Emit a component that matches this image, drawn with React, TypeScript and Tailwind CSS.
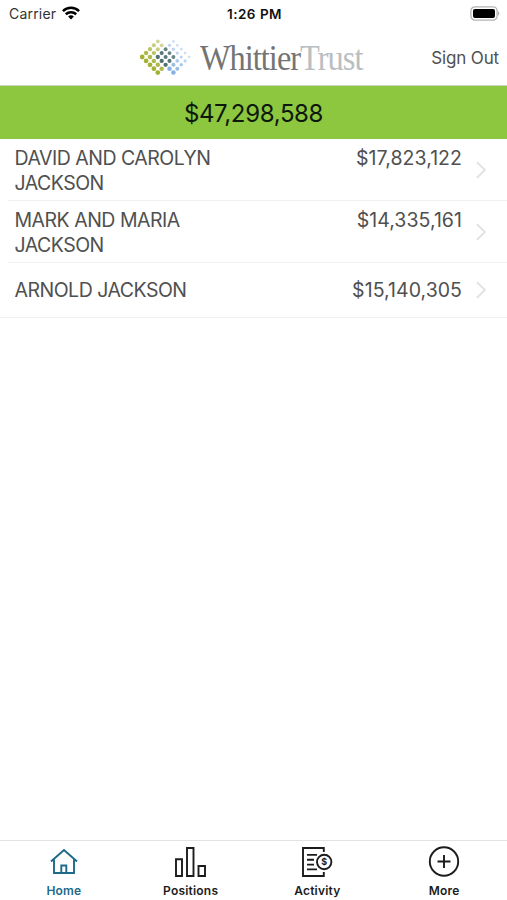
import React from "react";

type Dot = { x: number; y: number; c: string; r: number; o: number };
const dots: Dot[] = [];
const step = 3.9;
for (let i = 0; i < 5; i++) {
  for (let j = 0; j < 5; j++) {
    const u = i + j;
    const v = j - i;
    const shared = u - 4 >= Math.abs(v);
    dots.push({
      x: 4.2 + u * step,
      y: 21 + v * step,
      c: shared ? "#375c60" : "#a5b133",
      r: shared ? 2.35 - i * 0.1 : 2.4 - i * 0.14,
      o: shared ? 1 - i * 0.06 : 1 - i * 0.12,
    });
    // The right diamond starts four steps over and skips the cells both share.
    if (4 - u < Math.abs(v)) {
      dots.push({ x: 4.2 + (u + 4) * step, y: 21 + v * step, c: "#82addf", r: 2.25 - i * 0.22, o: 0.95 - i * 0.14 });
    }
  }
}

function Logo() {
  return (
    <div className="flex items-center">
      <svg width="54" height="42" viewBox="0 0 54 42">
        {dots.map((d, k) => (
          <circle key={k} cx={d.x} cy={d.y} r={d.r} fill={d.c} opacity={d.o} />
        ))}
      </svg>
      <div className="ml-2 flex w-[163px] origin-left scale-x-[0.925] pt-[5px] font-['Liberation_Serif',serif] text-[35px] leading-[42px] tracking-[-1.05px]">
        <span className="text-[#747474]">Whittier</span>
        <span className="text-[#b9bec2]">Trust</span>
      </div>
    </div>
  );
}

function Chevron() {
  return (
    <svg className="ml-[14px] mr-[21px] shrink-0" width="10" height="18" viewBox="0 0 10 18" fill="none" stroke="#e2e2e2" strokeWidth="1.9">
      <path d="M1 1.2 9 9 1 16.8" />
    </svg>
  );
}

function Row({ name, amount, h, last }: { name: React.ReactNode; amount: string; h: string; last?: boolean }) {
  return (
    <div className={last ? "border-b border-[#f2f2f2]" : ""}>
      <div className={`flex items-center ${h} ${last ? "pl-[15px]" : "ml-2 border-b border-[#f2f2f2] pl-[7px]"}`}>
        <div className={`flex grow items-start justify-between text-[19.5px] leading-[24.5px] text-[#505050] ${last ? "" : "pt-[2px]"}`}>
          <span className="-ml-[0.5px] tracking-[-0.5px]">{name}</span>
          <span className="tracking-[0.05px]">{amount}</span>
        </div>
        <Chevron />
      </div>
    </div>
  );
}

function Tab({ label, active, children }: { label: string; active?: boolean; children: React.ReactNode }) {
  return (
    <div className={`flex flex-1 flex-col items-center pl-px pt-[5px] ${active ? "text-[#1d6a8a]" : "text-[#1c1c1c]"}`}>
      <svg width="32" height="32" viewBox="0 0 32 32" fill="none" stroke="currentColor" strokeWidth="1.9">
        {children}
      </svg>
      <span className="mt-[5px] text-[12px] font-semibold leading-4 tracking-[0.2px]">{label}</span>
    </div>
  );
}

export default function App() {
  return (
    <div className="flex h-[900px] w-[507px] flex-col overflow-hidden bg-white font-['Inter',sans-serif]">
      <div className="grid h-7 grid-cols-3 items-center pl-[9px] pr-[7px]">
        <div className="flex items-center gap-[6px] text-[14px] leading-5 tracking-[0.2px] text-[#333]">
          <span className="-mt-px">Carrier</span>
          <svg className="-mt-0.5" width="18" height="14" viewBox="0 0 19 14" fill="none" stroke="#000" strokeWidth="2.6">
            <path d="M1 5A12 12 0 0 1 18 5" />
            <path d="M4 8.3A8 8 0 0 1 15 8.3" />
            <path d="M6.5 10.8 9.5 13.8 12.5 10.8A4 4 0 0 0 6.5 10.8Z" fill="#000" stroke="none" />
          </svg>
        </div>
        <div className="whitespace-nowrap text-center text-[13.5px] font-semibold tracking-[0.5px] text-[#111]">1:26 PM</div>
        <svg className="-mt-0.5 justify-self-end" width="30" height="15" viewBox="0 0 30 15">
          <rect x="0.9" y="0.9" width="26.2" height="13.2" rx="4" fill="#fff" stroke="#b3b3b3" strokeWidth="1.3" />
          <rect x="3" y="3" width="22" height="9" rx="2" fill="#000" />
          <path d="M28 5.3Q30.5 7.5 28 9.7Z" fill="#aaa" />
        </svg>
      </div>
      <div className="flex h-[58px] items-center justify-between border-b border-[#cbd6c0] pl-[138px] pr-2">
        <Logo />
        <span className="whitespace-nowrap pt-[5px] text-[17px] tracking-[-0.15px] text-[#505050]">Sign Out</span>
      </div>
      <div className="flex h-[53px] items-center justify-center bg-[#8dc63f] pt-[2px] text-[24px] tracking-[-0.35px] text-[#0c180c]">
        <span>$47,298,588</span>
      </div>
      <Row name={<>DAVID AND CAROLYN<br />JACKSON</>} amount="$17,823,122" h="h-[62px]" />
      <Row name={<>MARK AND MARIA<br />JACKSON</>} amount="$14,335,161" h="h-[62px]" />
      <Row name="ARNOLD JACKSON" amount="$15,140,305" h="h-[54px]" last />
      <div className="grow" />
      <div className="flex h-[60px] border-t border-[#e2e2e2]">
        <Tab label="Home" active>
          <path d="M3 15.5 16 4 29 15.5M6 13.5V27H26V13.5M13.3 27V19.5H18.3V27" />
        </Tab>
        <Tab label="Positions">
          <path d="M1 13.2H7V30H1ZM12 2H18.5V30H12ZM23.5 20H30V30H23.5Z" />
        </Tab>
        <Tab label="Activity">
          <path d="M22.8 6V2H2V30H22.8V26M6 8.9H16M6 13.8H13M6 18.6H13M6 23.4H16" />
          <circle cx="23.2" cy="16" r="7.2" />
          <text x="23.2" y="19.2" textAnchor="middle" fontSize="9" fontWeight="700" fill="currentColor" stroke="none">$</text>
        </Tab>
        <Tab label="More">
          <circle cx="16" cy="15.5" r="14.2" />
          <path d="M9.5 15.5H22.5M16 9V22" />
        </Tab>
      </div>
    </div>
  );
}
